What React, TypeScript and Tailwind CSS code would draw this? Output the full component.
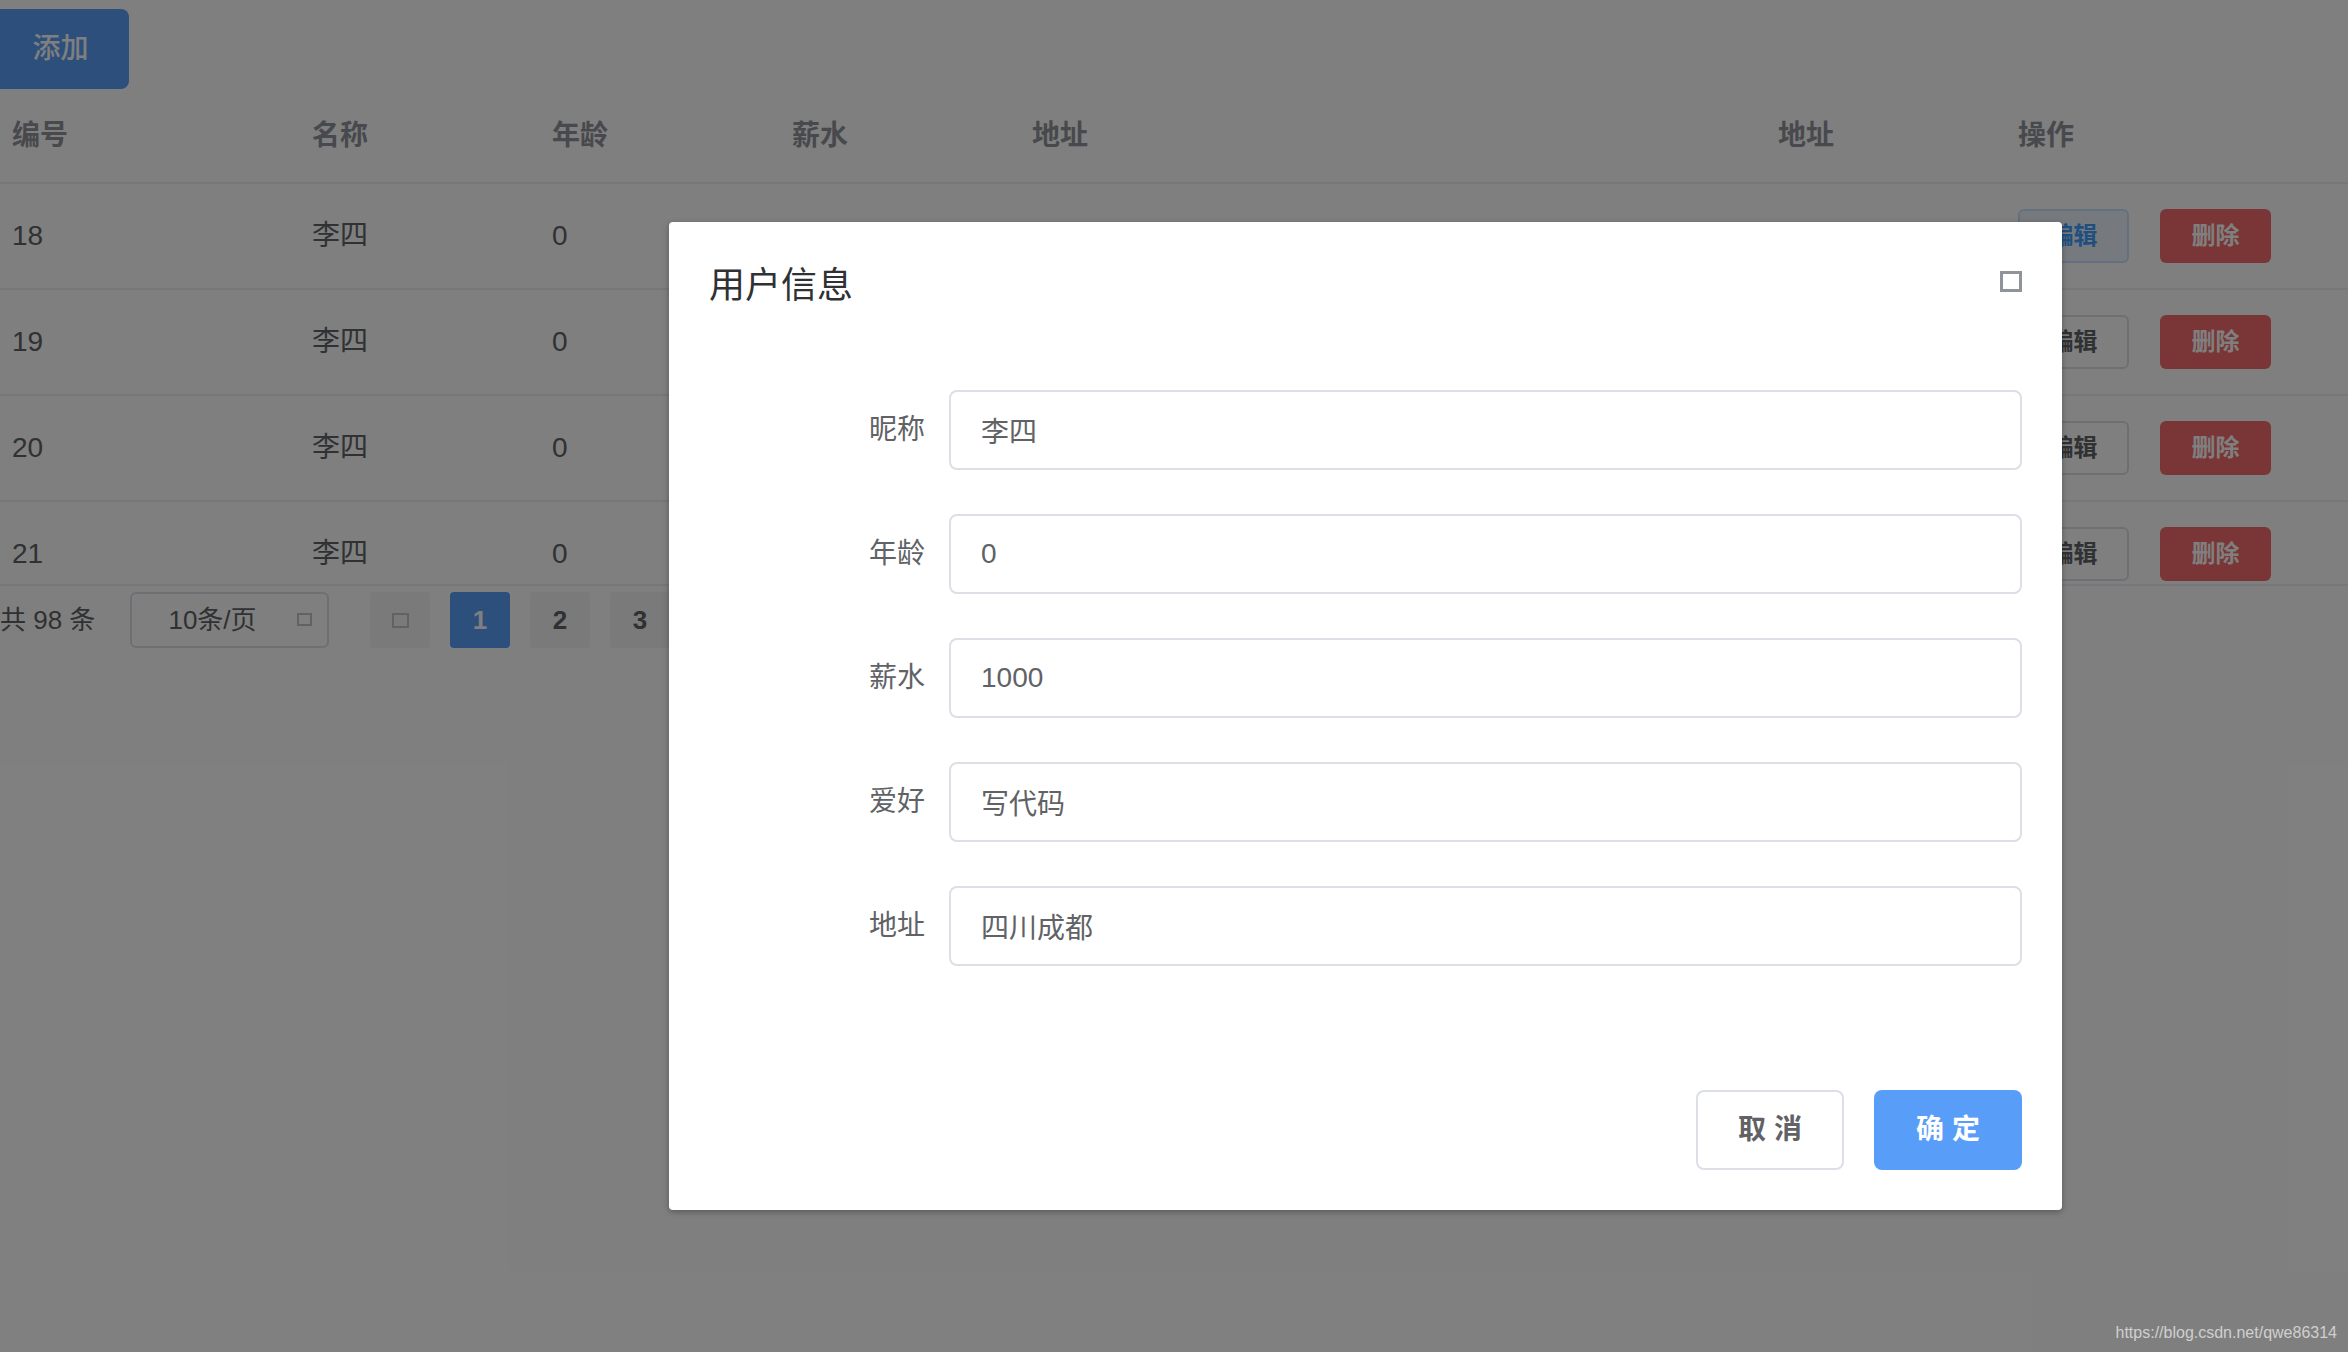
import React from 'react';

type Row = { id: number; name: string; age: number; salary: number; address: string };

const rows: Row[] = [18, 19, 20, 21].map((id) => ({
  id,
  name: '李四',
  age: 0,
  salary: 1000,
  address: '',
}));

const fields = [
  { label: '昵称', value: '李四' },
  { label: '年龄', value: '0' },
  { label: '薪水', value: '1000' },
  { label: '爱好', value: '写代码' },
  { label: '地址', value: '四川成都' },
];

const cols = 'grid grid-cols-[300px_240px_240px_240px_746px_240px_1fr] items-center';

function Tofu({ className }: { className: string }) {
  return <span className={`inline-block ${className}`} />;
}

export default function App() {
  return (
    <div className="relative h-screen w-full overflow-hidden bg-white font-['Liberation_Sans','Noto_Sans_CJK_SC',sans-serif]">
      {/* page behind the dialog */}
      <div className="-ml-[8px] w-[calc(100%+8px)]">
        <button className="mt-[9px] h-[80px] w-[137px] rounded-[8px] bg-[#589ef9] text-[28px] font-medium text-white">
          添加
        </button>

        <div className="w-full">
          <div className={`${cols} h-[95px] border-b-2 border-[#ebeef5] text-[28px] font-bold text-[#909399]`}>
            <div className="px-[20px]">编号</div>
            <div className="px-[20px]">名称</div>
            <div className="px-[20px]">年龄</div>
            <div className="px-[20px]">薪水</div>
            <div className="px-[20px]">地址</div>
            <div className="px-[20px]">地址</div>
            <div className="px-[20px]">操作</div>
          </div>
          <div className="h-[402px] overflow-hidden border-b-2 border-[#ebeef5]">
            {rows.map((row, i) => (
              <div key={row.id} className={`${cols} h-[106px] border-b-2 border-[#ebeef5] text-[28px] text-[#606266]`}>
                <div className="px-[20px]">{row.id}</div>
                <div className="px-[20px]">{row.name}</div>
                <div className="px-[20px]">{row.age}</div>
                <div className="px-[20px]">{row.salary}</div>
                <div className="px-[20px]">{row.address}</div>
                <div className="px-[20px]">{row.address}</div>
                <div className="flex gap-[31px] px-[20px]">
                  <button
                    className={`h-[54px] w-[111px] rounded-[6px] border-2 text-[24px] font-semibold ${
                      i === 0
                        ? 'border-[#c6e2ff] bg-[#ecf5ff] text-[#409eff]'
                        : 'border-[#dcdfe6] bg-white text-[#606266]'
                    }`}
                  >
                    编辑
                  </button>
                  <button className="h-[54px] w-[111px] rounded-[6px] bg-[#f56c6c] text-[24px] font-semibold text-white">
                    删除
                  </button>
                </div>
              </div>
            ))}
          </div>

          <div className="flex items-center pl-[8px] pt-[6px] text-[26px] text-[#606266]">
            <span className="w-[100px]">共 98 条</span>
            <div className="relative ml-[30px] flex h-[56px] w-[199px] items-center rounded-[6px] border-2 border-[#dcdfe6] pl-[16px] pr-[50px]">
              <span className="flex-1 text-center">10条/页</span>
              <Tofu className="absolute right-[15px] top-[19px] h-[13px] w-[15px] border-2 border-[#c0c4cc]" />
            </div>
            <div className="ml-[41px] flex h-[56px] w-[60px] items-center justify-center rounded-[4px] bg-[#f4f4f5]">
              <Tofu className="h-[15px] w-[17px] border-2 border-[#c0c4cc]" />
            </div>
            <div className="ml-[20px] flex h-[56px] w-[60px] items-center justify-center rounded-[4px] bg-[#589ef9] font-bold text-white">
              1
            </div>
            <div className="ml-[20px] flex h-[56px] w-[60px] items-center justify-center rounded-[4px] bg-[#f4f4f5] font-bold text-[#606266]">
              2
            </div>
            <div className="ml-[20px] flex h-[56px] w-[60px] items-center justify-center rounded-[4px] bg-[#f4f4f5] font-bold text-[#606266]">
              3
            </div>
            <div className="ml-[20px] flex h-[56px] w-[60px] items-center justify-center rounded-[4px] bg-[#f4f4f5] font-bold text-[#606266]">
              4
            </div>
          </div>
        </div>
      </div>

      {/* mask */}
      <div className="absolute inset-0 bg-black/50" />

      {/* dialog */}
      <div className="absolute left-[669px] top-[222px] w-[1393px] rounded-[4px] bg-white shadow-[0_2px_6px_rgba(0,0,0,0.3)]">
        <div className="relative px-[40px] pb-[20px] pt-[40px]">
          <h2 className="text-[36px] leading-[48px] text-[#303133]">用户信息</h2>
          <Tofu className="absolute right-[40px] top-[49px] h-[21px] w-[22px] border-[3px] border-[#909399]" />
        </div>
        <div className="px-[40px] py-[60px]">
          {fields.map((field) => (
            <div key={field.label} className="mb-[44px] flex">
              <label className="w-[240px] pr-[24px] text-right text-[28px] leading-[80px] text-[#606266]">
                {field.label}
              </label>
              <input
                defaultValue={field.value}
                className="h-[80px] flex-1 rounded-[8px] border-2 border-[#dcdfe6] px-[30px] text-[28px] text-[#606266] outline-none"
              />
            </div>
          ))}
        </div>
        <div className="flex justify-end gap-[30px] px-[40px] pb-[40px] pt-[20px]">
          <button className="h-[80px] w-[148px] rounded-[8px] border-2 border-[#dcdfe6] bg-white text-[28px] font-semibold text-[#606266]">
            取 消
          </button>
          <button className="h-[80px] w-[148px] rounded-[8px] bg-[#589ef9] text-[28px] font-semibold text-white">
            确 定
          </button>
        </div>
      </div>

      <div className="absolute bottom-[10px] right-[11px] text-[16px] leading-[18px] text-[#cfcfcf]">
        https://blog.csdn.net/qwe86314
      </div>
    </div>
  );
}
